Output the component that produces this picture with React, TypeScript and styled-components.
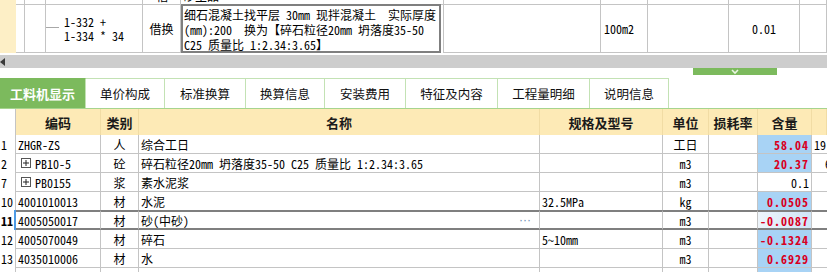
import React from 'react';
import styled, { createGlobalStyle, css } from 'styled-components';

const MONO = `"Noto Sans Mono CJK SC", "Noto Sans CJK SC", "Liberation Mono", monospace`;
const UI = `"Noto Sans CJK SC", "Noto Sans", sans-serif`;

const Global = createGlobalStyle`
  html, body { margin: 0; padding: 0; background: #fff; overflow: hidden; }
  body { font-family: ${MONO}; font-size: 12px; color: #000; }
`;

const Page = styled.div`
  width: 827px;
  height: 272px;
  overflow: hidden;
  display: flex;
  flex-direction: column;
`;

/* ---------- top (quota) grid ---------- */
const TOP_COLS = '16px 9px 21px 97px 38px 263px 157px 47px 81px 71px 1fr';

const TopGrid = styled.div`
  display: grid;
  grid-template-columns: ${TOP_COLS};
  grid-template-rows: 5px 48px;
  flex: none;
`;

const TopCell = styled.div<{ $side?: boolean; $align?: 'left' | 'center' }>`
  box-sizing: border-box;
  border-right: 1px solid ${p => (p.$side ? '#fdefc6' : '#c4c4c4')};
  border-bottom: 1px solid ${p => (p.$side ? '#fdefc6' : '#c4c4c4')};
  background: ${p => (p.$side ? '#fdefc6' : '#fff')};
  overflow: hidden;
  white-space: pre;
  display: flex;
  align-items: center;
  justify-content: ${p => (p.$align === 'center' ? 'center' : 'flex-start')};
`;

const SliverText = styled.span`
  display: block;
  line-height: 14px;
  margin-top: -11px;
  align-self: flex-start;
  padding-left: 2px;
`;

const TreeCell = styled(TopCell)`
  padding-left: 0;
  gap: 4px;
`;

const TreeLine = styled.span`
  width: 13px;
  height: 1px;
  background: #a8a8a8;
  flex: none;
  margin-top: -2px;
`;

const TwoLines = styled.span`
  display: flex;
  flex-direction: column;
  line-height: 14px;
  margin-top: 0;
  padding-left: 1px;
`;

const BoxCell = styled.div`
  box-sizing: border-box;
  border-right: 1px solid #c4c4c4;
  padding-right: 2px;
  margin-top: -1px;
  display: flex;
`;

const DescBox = styled.div`
  box-sizing: border-box;
  flex: 1;
  border: 2px solid #7f7f7f;
  padding: 1px 0 0 1px;
  line-height: 15px;
  white-space: pre;
  overflow: hidden;
`;

const UnitText = styled.span`
  padding-left: 3px;
`;

/* ---------- scroll / splitter ---------- */
const HScroll = styled.div`
  margin-top: 2px;
  height: 13px;
  background: #cdcdcd;
  display: flex;
  align-items: center;
  flex: none;
`;

const HandleRow = styled.div`
  height: 10px;
  padding-left: 693px;
  flex: none;
`;

const Handle = styled.div`
  width: 84px;
  height: 7px;
  background: #7cba5d;
  display: flex;
  align-items: center;
  justify-content: center;
`;

/* ---------- tabs ---------- */
const TabBar = styled.div`
  display: flex;
  height: 31px;
  box-sizing: border-box;
  border-bottom: 1px solid #a6d48e;
  flex: none;
`;

const Tab = styled.div<{ $w: number; $active?: boolean }>`
  box-sizing: border-box;
  width: ${p => p.$w}px;
  height: 30px;
  border-top: 1px solid ${p => (p.$active ? '#7cba5d' : '#c3e2b4')};
  border-right: 1px solid #c3e2b4;
  display: flex;
  align-items: center;
  justify-content: center;
  font-family: ${UI};
  ${p =>
    p.$active
      ? css`
          background: #7cba5d;
          color: #fff;
          font-weight: 700;
          font-size: 13px;
        `
      : css`
          background: #fff;
          color: #111;
          font-size: 12.5px;
        `}
`;

/* ---------- detail table ---------- */
const COLS = '16px 85px 38px 401px 123px 46px 49px 54px 1fr';

const HeadRow = styled.div`
  display: grid;
  grid-template-columns: ${COLS};
  height: 26px;
  flex: none;
`;

const HeadCell = styled.div<{ $blank?: boolean }>`
  box-sizing: border-box;
  background: ${p => (p.$blank ? '#fff' : '#fdeab6')};
  border-right: 1px solid ${p => (p.$blank ? '#c4c4c4' : '#f1dca4')};
  display: flex;
  align-items: center;
  justify-content: center;
  font-family: ${UI};
  font-weight: 700;
  font-size: 13px;
  color: #1a1a1a;
`;

const Row = styled.div<{ $sel?: boolean }>`
  display: grid;
  grid-template-columns: ${COLS};
  height: ${p => (p.$sel ? 20 : 19)}px;
  margin-top: ${p => (p.$sel ? -1 : 0)}px;
  flex: none;
`;

const Cell = styled.div<{ $sel?: boolean; $align?: 'left' | 'center' | 'right' }>`
  box-sizing: border-box;
  border-right: 1px solid #c4c4c4;
  border-bottom: ${p => (p.$sel ? '2px solid #7f7f7f' : '1px solid #c4c4c4')};
  border-top: ${p => (p.$sel ? '2px solid #7f7f7f' : '0')};
  display: flex;
  align-items: center;
  justify-content: ${p =>
    p.$align === 'center' ? 'center' : p.$align === 'right' ? 'flex-end' : 'flex-start'};
  padding: 0 2px;
  overflow: hidden;
  white-space: pre;
`;

const NumCell = styled.div<{ $sel?: boolean }>`
  box-sizing: border-box;
  border-right: ${p => (p.$sel ? '2px solid #4d9be6' : '1px solid #c4c4c4')};
  display: flex;
  align-items: center;
  padding-left: 1px;
  font-weight: ${p => (p.$sel ? 700 : 400)};
  overflow: hidden;
`;

const NameCell = styled(Cell)`
  justify-content: space-between;
`;

const Dots = styled.span`
  font-family: "Liberation Sans", Arial, sans-serif;
  font-size: 12px;
  color: #6a8db3;
  padding-right: 6px;
`;

const QtyCell = styled(Cell)<{ $hl?: boolean; $soft?: boolean }>`
  justify-content: flex-end;
  padding-right: 2px;
  background: ${p =>
    p.$soft
      ? 'linear-gradient(90deg, #eef5fb 0%, #cfe5f7 100%)'
      : p.$hl
      ? '#a8d3f5'
      : '#fff'};
  color: ${p => (p.$hl ? '#d8001f' : '#000')};
  font-weight: ${p => (p.$hl ? 700 : 400)};
  letter-spacing: ${p => (p.$hl ? '1px' : '0')};
`;

const ExtraCell = styled(Cell)<{ $pad: number }>`
  padding-left: ${p => p.$pad}px;
  border-right: 0;
`;

const Expander = styled.span`
  display: inline-flex;
  margin: 0 4px 0 3px;
`;

type RowData = {
  n: string;
  code: string;
  plus?: boolean;
  type: string;
  name: string;
  spec?: string;
  unit: string;
  qty: string;
  hl: boolean;
  soft?: boolean;
  sel?: boolean;
  extra?: string;
  pad?: number;
};

const rows: RowData[] = [
  { n: '1', code: 'ZHGR-ZS', type: '人', name: '综合工日', unit: '工日', qty: '58.04', hl: true, extra: '19', pad: 2 },
  {
    n: '2',
    code: 'PB10-5',
    plus: true,
    type: '砼',
    name: '碎石粒径20mm 坍落度35-50 C25 质量比 1:2.34:3.65',
    unit: 'm3',
    qty: '20.37',
    hl: true,
    extra: '6',
    pad: 13,
  },
  { n: '7', code: 'PB0155', plus: true, type: '浆', name: '素水泥浆', unit: 'm3', qty: '0.1', hl: false },
  { n: '10', code: '4001010013', type: '材', name: '水泥', spec: '32.5MPa', unit: 'kg', qty: '0.0505', hl: true },
  { n: '11', code: '4005050017', type: '材', name: '砂(中砂)', unit: 'm3', qty: '-0.0087', hl: true, soft: true, sel: true },
  { n: '12', code: '4005070049', type: '材', name: '碎石', spec: '5~10mm', unit: 'm3', qty: '-0.1324', hl: true },
  { n: '13', code: '4035010006', type: '材', name: '水', unit: 'm3', qty: '0.6929', hl: true },
  { n: '', code: '', type: '', name: '', unit: '', qty: '', hl: true },
];

const tabs: { label: string; w: number }[] = [
  { label: '工料机显示', w: 86 },
  { label: '单价构成', w: 79 },
  { label: '标准换算', w: 81 },
  { label: '换算信息', w: 79 },
  { label: '安装费用', w: 81 },
  { label: '特征及内容', w: 92 },
  { label: '工程量明细', w: 92 },
  { label: '说明信息', w: 79 },
];

const heads = ['', '编码', '类别', '名称', '规格及型号', '单位', '损耗率', '含量', ''];

const PlusBox = () => (
  <svg width="10" height="10" viewBox="0 0 10 10">
    <rect x="0.5" y="0.5" width="9" height="9" fill="#fff" stroke="#555" />
    <line x1="2" y1="5" x2="8" y2="5" stroke="#222" />
    <line x1="5" y1="2" x2="5" y2="8" stroke="#222" />
  </svg>
);

export default function App() {
  return (
    <Page>
      <Global />
      <TopGrid>
        <TopCell $side />
        <TopCell />
        <TopCell />
        <TopCell />
        <TopCell $align="center">
          <SliverText>借</SliverText>
        </TopCell>
        <TopCell>
          <SliverText>砂主品</SliverText>
        </TopCell>
        <TopCell />
        <TopCell />
        <TopCell />
        <TopCell />
        <TopCell />

        <TopCell $side />
        <TopCell />
        <TopCell />
        <TreeCell>
          <TreeLine />
          <TwoLines>
            <span>1-332 +</span>
            <span>1-334 * 34</span>
          </TwoLines>
        </TreeCell>
        <TopCell $align="center">借换</TopCell>
        <BoxCell>
          <DescBox>
            {'细石混凝土找平层 30mm 现拌混凝土  实际厚度\n(mm):200  换为【碎石粒径20mm 坍落度35-50\nC25 质量比 1:2.34:3.65】'}
          </DescBox>
        </BoxCell>
        <TopCell />
        <TopCell>
          <UnitText>100m2</UnitText>
        </TopCell>
        <TopCell />
        <TopCell $align="center">0.01</TopCell>
        <TopCell />
      </TopGrid>

      <HScroll>
        <svg width="6" height="8" viewBox="0 0 6 8">
          <polygon points="5,0 5,8 0,4" fill="#3a3a3a" />
        </svg>
      </HScroll>

      <HandleRow>
        <Handle>
          <svg width="10" height="6" viewBox="0 0 10 6">
            <polyline points="2,1 5,4 8,1" fill="none" stroke="#eaf5e3" strokeWidth="1.6" />
          </svg>
        </Handle>
      </HandleRow>

      <TabBar>
        {tabs.map((t, i) => (
          <Tab key={t.label} $w={t.w} $active={i === 0}>
            {t.label}
          </Tab>
        ))}
      </TabBar>

      <HeadRow>
        {heads.map((h, i) => (
          <HeadCell key={i} $blank={i === 0}>
            {h}
          </HeadCell>
        ))}
      </HeadRow>

      {rows.map((r, i) => (
        <Row key={i} $sel={r.sel}>
          <NumCell $sel={r.sel}>{r.n}</NumCell>
          <Cell $sel={r.sel}>
            {r.plus && (
              <Expander>
                <PlusBox />
              </Expander>
            )}
            {r.code}
          </Cell>
          <Cell $sel={r.sel} $align="center">
            {r.type}
          </Cell>
          <NameCell $sel={r.sel}>
            <span>{r.name}</span>
            {r.sel && <Dots>···</Dots>}
          </NameCell>
          <Cell $sel={r.sel}>{r.spec ?? ''}</Cell>
          <Cell $sel={r.sel} $align="center">
            {r.unit}
          </Cell>
          <Cell $sel={r.sel} />
          <QtyCell $sel={r.sel} $hl={r.hl} $soft={r.soft}>
            {r.qty}
          </QtyCell>
          <ExtraCell $sel={r.sel} $pad={r.pad ?? 2}>
            {r.extra ?? ''}
          </ExtraCell>
        </Row>
      ))}
    </Page>
  );
}
